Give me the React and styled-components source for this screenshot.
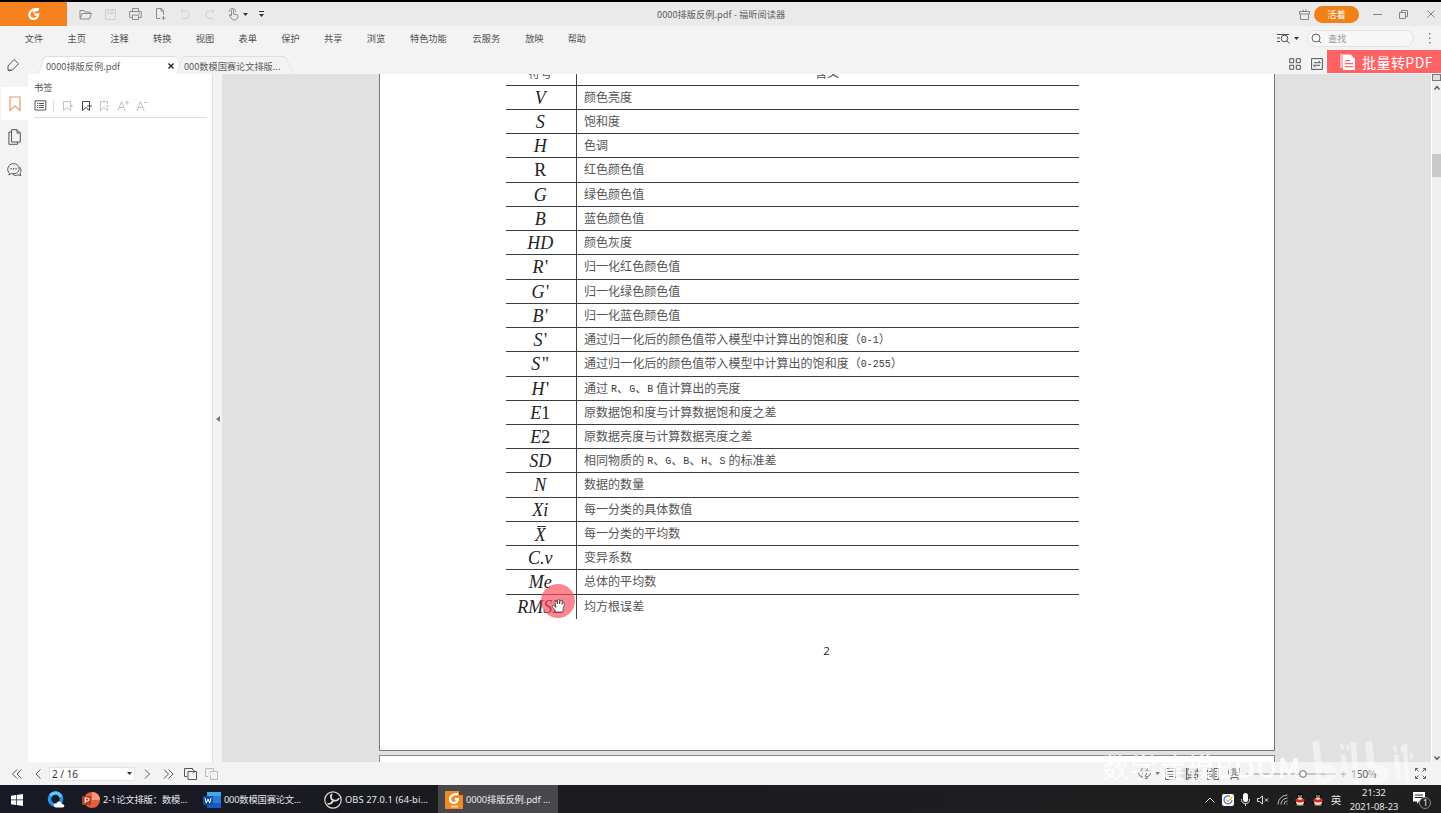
import React from 'react';
import styled, { createGlobalStyle } from 'styled-components';

const Global = createGlobalStyle`
  * { box-sizing: border-box; }
  body { margin: 0; background: #000; overflow: hidden; }
  svg { display: block; flex: none; }
`;

const ui = `'Noto Sans', 'Noto Sans CJK SC', sans-serif`;

const Screen = styled.div`
  width: 1441px;
  height: 813px;
  padding-top: 2px;
  display: flex;
  flex-direction: column;
  background: #000;
  color: #505050;
  font: 9.2px/12px 'Noto Sans CJK SC', sans-serif;
  white-space: pre;
  position: relative;
`;

const TitleBar = styled.header`
  height: 24px;
  display: flex;
  align-items: center;
  background: #eaeaea;
`;
const Brand = styled.div`
  width: 67px;
  height: 24px;
  display: grid;
  place-items: center;
  background: #f5821f;
`;
const QuickTools = styled.div`
  width: 590px;
  padding-left: 6.6px;
  display: flex;
  align-items: center;
`;
const QuickTool = styled.span`
  width: ${p => p.$w || 24.8}px;
  display: flex;
  justify-content: center;
  color: ${p => (p.$off ? '#cfcfcf' : '#8c8c8c')};
`;
const WindowTitle = styled.div`
  flex: 1;
  color: #606060;
  letter-spacing: 0.04px;
`;
const WindowTools = styled.div`
  display: flex;
  align-items: center;
  color: #858585;
`;
const Account = styled.span`
  width: 45px;
  height: 17px;
  margin: 0 8px 0 4px;
  border-radius: 9px;
  background: #f08018;
  color: #fff;
  text-align: center;
  line-height: 17px;
`;
const WinButton = styled.span`
  width: ${p => p.$w}px;
  display: flex;
  justify-content: center;
`;

const MenuBar = styled.nav`
  height: 24px;
  padding-left: 12.6px;
  display: flex;
  align-items: center;
  background: #f3f3f3;
`;
const MenuItem = styled.span`
  width: ${p => p.$w || 42.75}px;
  text-align: center;
`;
const MenuRight = styled.div`
  margin-left: auto;
  display: flex;
  align-items: center;
`;
const CaretSlot = styled.span`
  padding: 0 ${p => p.$r}px 0 4px;
`;
const Search = styled.div`
  width: 107px;
  height: 17px;
  margin: 0 13px 0 8px;
  padding-left: 3px;
  display: flex;
  align-items: center;
  gap: 6px;
  border: 1px solid #e2e2e2;
  border-radius: 9px;
  background: #f7f7f7;
  color: #9a9a9a;
`;

const TabBar = styled.div`
  height: 24px;
  display: flex;
  align-items: flex-end;
  background: #f3f3f3;
`;
const PenSlot = styled.div`
  width: 42px;
  height: 24px;
  padding: 8px 0 0 6px;
`;
const Tab = styled.div`
  position: relative;
  width: ${p => p.$w}px;
  height: 18px;
  margin-right: 7px;
  margin-left: ${p => (p.$active ? 0 : -6)}px;
  padding: 2px ${p => (p.$active ? 5 : 0)}px 0 4px;
  display: flex;
  align-items: center;
  justify-content: space-between;
  color: #5c5c5c;
  &::before, &::after {
    content: '';
    position: absolute;
    top: 0;
    bottom: 0;
    background: ${p => (p.$active ? '#fff' : '#f3f3f3')};
    border-top: 1px solid #dedede;
  }
  &::before {
    left: -1px;
    right: 50%;
    border-left: 1px solid #dedede;
    border-radius: 4px 0 0 0;
    transform: skewX(-18deg);
  }
  &::after {
    right: 0;
    left: calc(50% - 4px);
    border-right: 1px solid #dedede;
    border-radius: 0 4px 0 0;
    transform: skewX(${p => (p.$active ? 18 : 26)}deg);
  }
  > * { position: relative; z-index: 1; }
`;
const TabTools = styled.div`
  height: 24px;
  margin-left: auto;
  display: flex;
  align-items: center;
  gap: 10px;
`;
const ToolSlot = styled.span`
  padding-top: 3px;
`;
const Promo = styled.div`
  width: 114px;
  height: 23px;
  margin: 0 0 1px -6px;
  padding-left: 13px;
  display: flex;
  align-items: center;
  gap: 7px;
  background: #ff6265;
  color: #fff;
  font-size: 14px;
  line-height: 20px;
  letter-spacing: 0.45px;
`;

const Main = styled.main`
  height: 688px;
  display: flex;
  background: #f3f3f3;
`;
const Rail = styled.aside`
  width: 28px;
  padding-top: 13px;
`;
const RailItem = styled.div`
  height: 33px;
  margin-left: 1px;
  display: grid;
  place-items: center;
  background: ${p => (p.$active ? '#fff' : 'transparent')};
  color: ${p => (p.$active ? '#e6986a' : '#555')};
`;
const Panel = styled.section`
  width: 185px;
  padding: 7px 5px 0 6px;
  border-right: 1px solid #e0e0e0;
  background: #fff;
`;
const PanelTools = styled.div`
  height: 25px;
  padding-top: 1px;
  display: flex;
  align-items: center;
  border-bottom: 1px solid #dfdfdf;
`;
const PanelTool = styled.span`
  width: 18.7px;
  display: flex;
  justify-content: center;
  color: ${p => (p.$on ? '#444' : '#c0c0c0')};
`;
const Divider = styled.i`
  width: 1px;
  height: 12px;
  margin: 0 4px 0 6px;
  background: #ddd;
`;
const Splitter = styled.div`
  width: 9px;
  display: flex;
  align-items: center;
  padding: 2px 0 0 3px;
`;
const Canvas = styled.section`
  width: 1209px;
  height: 688px;
  padding-left: 157px;
  overflow: hidden;
  background: #e1e1e1;
`;
const Page = styled.article`
  display: flow-root;
  width: 896px;
  height: 677px;
  padding: 0 194px 0 126px;
  background: #fff;
  border: solid #777;
  border-width: 0 1px 1px 1px;
`;
const NextPage = styled.div`
  width: 896px;
  height: 20px;
  margin-top: 4px;
  background: #fff;
  border: 1px solid #888;
`;
const Table = styled.div`
  width: 573px;
  margin-top: -12.5px;
`;
const Row = styled.div`
  height: ${p => (p.$last ? 22.5 : 24.24)}px;
  display: grid;
  grid-template-columns: 70.5px 1fr;
  border-bottom: ${p => (p.$last ? '0' : '1px solid #3c3c3c')};
`;
const Sym = styled.div`
  height: 100%;
  overflow: hidden;
  border-right: 1px solid #444;
  text-align: center;
  padding-right: 1px;
  color: #222;
  font: ${p => (p.$upright ? 'normal' : 'italic')} 18px/24px 'Liberation Serif', serif;
  i { font-style: normal; }
`;
const Bar = styled.span`
  display: block;
  width: 20px;
  height: 19px;
  margin: 4px auto 0;
  line-height: 19px;
  background: linear-gradient(#333, #333) 7px 0 / 9px 1px no-repeat;
`;
const Meaning = styled.div`
  padding-left: 7.5px;
  color: #3a3a3a;
  font: 10px/21px 'Liberation Mono', 'Noto Sans CJK SC', monospace;
`;
const Song = styled.span`
  font: 400 12.04px/21px 'Noto Sans CJK SC', serif;
  color: #555;
`;
const Half = styled.span`
  word-spacing: -3px;
  vertical-align: 1px;
  line-height: 18px;
`;
const HeadCell = styled.div`
  text-align: center;
  padding-right: 1px;
  color: #555;
  border-right: ${p => (p.$line ? '1px solid #444' : '0')};
  font: 400 12px/22px 'Noto Sans CJK SC', serif;
`;
const PageNumber = styled.div`
  margin-top: 25.5px;
  padding-left: 67px;
  text-align: center;
  color: #222;
  font: 500 11.5px/16px 'Open Sans', sans-serif;
`;
const Scroll = styled.div`
  flex: 1;
  display: flex;
  flex-direction: column;
  align-items: center;
  border-left: 1px solid #fff;
  background: #efefef;
  color: #555;
`;
const ScrollHead = styled.i`
  width: 9px;
  height: 7px;
  margin-bottom: 4px;
  border: 1px solid #777;
  background: #ddd;
`;
const Thumb = styled.i`
  width: 9px;
  height: 23px;
  margin: 63px 0 auto;
  background: #c9c9c9;
`;

const StatusBar = styled.footer`
  height: 23px;
  padding-left: 11px;
  display: flex;
  align-items: center;
  background: #f3f3f3;
  color: #555;
`;
const PageBox = styled.div`
  width: 86px;
  height: 14px;
  margin: 0 8px 0 6px;
  padding: 0 2px;
  display: flex;
  align-items: center;
  justify-content: space-between;
  border: 1px solid #e4e4e4;
  background: #fff;
  color: #333;
  font: 10px/12px ${ui};
`;
const StatusRight = styled.div`
  margin-left: auto;
  display: flex;
  align-items: center;
  color: #666;
`;
const ViewMode = styled.span`
  width: 21px;
  display: flex;
  justify-content: center;
  background: ${p => (p.$on ? '#e0e0e0' : 'transparent')};
`;
const Percent = styled.span`
  width: 68px;
  padding-left: 4px;
  font: 10.5px/12px ${ui};
  letter-spacing: -0.4px;
`;

const TaskBar = styled.div`
  height: 28px;
  display: flex;
  align-items: center;
  background: linear-gradient(90deg, #171925, #1c1b1f 40%, #1f1f1f);
  color: #e8e8e8;
  font: 9.3px/12px ${ui};
`;
const Launcher = styled.div`
  width: ${p => p.$w}px;
  padding-top: 1px;
  display: flex;
  justify-content: center;
`;
const Task = styled.div`
  width: ${p => p.$w}px;
  height: 28px;
  padding: 2px 0 0 ${p => p.$pad}px;
  display: flex;
  align-items: center;
  gap: 3px;
  background: ${p => (p.$active ? '#48484c' : 'transparent')};
  letter-spacing: ${p => p.$ls || 0}px;
`;
const Tray = styled.div`
  margin-left: auto;
  padding-top: 1px;
  display: flex;
  align-items: center;
`;
const TrayItem = styled.span`
  width: ${p => p.$w || 18}px;
  display: flex;
  justify-content: center;
  font-size: ${p => p.$size || 9.3}px;
`;
const Clock = styled.div`
  width: 58px;
  text-align: center;
  line-height: 14px;
`;

const Pointer = styled.div`
  position: absolute;
  left: 541px;
  top: 584px;
  width: 34px;
  height: 34px;
  padding: 15px 0 0 10px;
  border-radius: 50%;
  background: rgba(250, 75, 95, 0.68);
`;
const Watermark = styled.div`
  position: absolute;
  left: 1102px;
  top: 738px;
  display: flex;
  align-items: flex-start;
  gap: 9px;
  color: #fff;
  opacity: 0.8;
  font: 500 27px/58px 'Noto Sans CJK SC', sans-serif;
  letter-spacing: 1.3px;
`;

const Svg = ({ w = 12, h = w, children, sw = 1, fill = 'none' }) => (
  <svg width={w} height={h} viewBox={`0 0 ${w} ${h}`} fill={fill} stroke={fill === 'none' ? 'currentColor' : 'none'} strokeWidth={sw}>
    {children}
  </svg>
);
const Caret = ({ c = '#333' }) => (
  <svg width="5" height="3" viewBox="0 0 5 3"><path d="M0 0h5L2.5 3z" fill={c} /></svg>
);
const FoxitG = ({ size = 12 }) => (
  <svg width={size} height={size} viewBox="0 0 12 12" fill="none">
    <path d="M10.500 1.300C6 .5 1.800 2.500 1.400 6.200 1.100 9.200 3 10.800 5.400 10.800c2.700 0 4.400-1.500 4.700-4.300H6.500" stroke="#fff" strokeWidth="2.300" />
    <path d="M11.500.3C8 .4 5.500 2.500 4.500 6 6.500 4 8 3.300 10 3z" fill="#fff" />
  </svg>
);
const Flag = ({ mark }) => (
  <Svg w={11} h={12}>
    <path d="M8.500 4V1.500h-7v9L5 7.500l3.500 3V8" />
    <path d={mark} />
  </Svg>
);
const Penguin = () => (
  <svg width="12" height="13" viewBox="0 0 12 13">
    <path d="M2 8C0 9 .5 11 2 10M10 8c2 1 1.500 3 0 2" stroke="#111" strokeWidth="1.500" fill="none" />
    <ellipse cx="6" cy="4" rx="3.300" ry="3.800" fill="#080808" />
    <ellipse cx="6" cy="8.500" rx="4" ry="3.700" fill="#eee" />
    <circle cx="4.900" cy="3" r=".8" fill="#fff" /><circle cx="7.100" cy="3" r=".8" fill="#fff" />
    <ellipse cx="6" cy="4.700" rx="1.800" ry=".8" fill="#f5a623" />
    <path d="M1.800 5.500c2.500 1.500 6 1.500 8.400 0l.6 2.700C7.500 9.800 4.500 9.800 1.200 8.200z" fill="#e02020" />
    <path d="M2.500 12h3M6.500 12h3" stroke="#f5a623" strokeWidth="1.200" />
  </svg>
);

const menus = [['文件'], ['主页'], ['注释'], ['转换'], ['视图'], ['表单'], ['保护'], ['共享'], ['浏览'], ['特色功能', 62], ['云服务', 54], ['放映', 42], ['帮助', 43]];

const rows = [
  ['V', '颜色亮度'],
  ['S', '饱和度'],
  ['H', '色调'],
  ['R', '红色颜色值', 'up'],
  ['G', '绿色颜色值'],
  ['B', '蓝色颜色值'],
  ['HD', '颜色灰度'],
  ["R'", '归一化红色颜色值'],
  ["G'", '归一化绿色颜色值'],
  ["B'", '归一化蓝色颜色值'],
  ["S'", '通过归一化后的颜色值带入模型中计算出的饱和度（0-1）'],
  ['S"', '通过归一化后的颜色值带入模型中计算出的饱和度（0-255）'],
  ["H'", '通过 R、G、B 值计算出的亮度'],
  ['E1', '原数据饱和度与计算数据饱和度之差'],
  ['E2', '原数据亮度与计算数据亮度之差'],
  ['SD', '相同物质的 R、G、B、H、S 的标准差'],
  ['N', '数据的数量'],
  ['Xi', '每一分类的具体数值'],
  ['X', '每一分类的平均数', 'bar'],
  ['C.v', '变异系数'],
  ['Me', '总体的平均数'],
  ['RMSE', '均方根误差'],
];

const Mixed = ({ text }) =>
  text.split(/([ -~]+)/).filter(Boolean).map((part, i) =>
    /^[ -~]/.test(part) ? <Half key={i}>{part}</Half> : <Song key={i}>{part}</Song>);

const Symbol = ({ text, kind }) => {
  if (kind === 'bar') return <Bar>{text}</Bar>;
  return text.split(/(['"\d]+)/).map((s, i) => (i % 2 ? <i key={i}>{/\d/.test(s) ? s : `\u200a${s}`}</i> : s));
};

export default function App() {
  return (
    <Screen>
      <Global />
      <TitleBar>
        <Brand><FoxitG /></Brand>
        <QuickTools>
          <QuickTool><Svg w={13} h={11}><path d="M1 9.500V1.500h4l1 1.500h5v1.500M1 10l2-5.500h9.500l-2 5.500z" /></Svg></QuickTool>
          <QuickTool $off><Svg w={11}><path d="M.5.500h10v10H.5zM3 .5v4h5v-4M6.500 1.500v2" /></Svg></QuickTool>
          <QuickTool><Svg w={13} h={12}><path d="M3.500 3.500v-3h6v3M3 9.500H.7v-6h11.600v6H10M3.500 7h6v4.500h-6zM9.500 5.300h1.500" /></Svg></QuickTool>
          <QuickTool><Svg w={11} h={12}><path d="M5 10.500H1.500v-10h5L8.500 3v4M6 .5V3h2.500M8.500 8v4M6.500 10h4" /></Svg></QuickTool>
          <QuickTool $off><Svg w={10} h={11}><path d="M1 2h4.500a3.800 3.800 0 0 1 0 7.600H2M3 0L1 2l2 2" /></Svg></QuickTool>
          <QuickTool $off><Svg w={10} h={11}><path d="M9 2H4.500a3.800 3.800 0 0 0 0 7.600H8M7 0l2 2-2 2" /></Svg></QuickTool>
          <QuickTool $w={21}><Svg w={12} h={13}><path d="M4.500 8V2.500c0-1.400 2-1.400 2 0V6l3.500.8c1 .3 1 1 .8 2-.3 2-1.300 3.200-3.300 3.200-2 0-3-1-4-3L2 7c.6-1 1.700-.4 2.500 1M2.500 4C1.500 1.500 4 .5 5.500.500S9 1.500 8.500 4" /></Svg></QuickTool>
          <Caret />
          <QuickTool $w={28}><Svg w={6} h={6} fill="#333"><path d="M0 0h5v1H0zM0 3h5L2.500 6z" /></Svg></QuickTool>
        </QuickTools>
        <WindowTitle>0000排版反例.pdf - 福昕阅读器</WindowTitle>
        <WindowTools>
          <Svg w={11} h={11}><path d="M.5 2.500h10v2.500H.5zM1.500 5v5.500h8V5M3.500.500L5.500 2.500 7.500.5" /></Svg>
          <Account>活着</Account>
          <WinButton $w={20}><Svg w={9} h={9}><path d="M0 4.500h9" /></Svg></WinButton>
          <WinButton $w={33}><Svg w={9} h={9}><path d="M.5 2.500h6v6h-6zM2.500 2V.5h6v6H7" /></Svg></WinButton>
          <WinButton $w={21}><Svg w={8} h={8}><path d="M.5.500l7 7M7.500.5l-7 7" /></Svg></WinButton>
        </WindowTools>
      </TitleBar>
      <MenuBar>
        {menus.map(([m, w]) => <MenuItem key={m} $w={w}>{m}</MenuItem>)}
        <MenuRight>
          <Svg w={13} h={11}><path d="M0 1.500h12M0 5h3M0 8.500h3" /><circle cx="7.500" cy="5.500" r="3.300" /><path d="M10 8l2.500 2.500" /></Svg>
          <CaretSlot $r={0}><Caret /></CaretSlot>
          <Search><Svg w={11} h={11}><circle cx="5" cy="5" r="4" stroke="#666" /><path d="M8 8l2 2" stroke="#666" /></Svg>查找</Search>
          <Svg w={14} h={11} fill="#777"><path d="M2 0h1.400v1.500H2zM2 4.500h1.400V6H2zM2 9h1.400v1.500H2z" /></Svg>
        </MenuRight>
      </MenuBar>
      <TabBar>
        <PenSlot><Svg w={14} h={14}><path d="M2 8L8 1.500l4.500 4.200L6.500 12l-4.500.3zM2 12.300h3" stroke="#555" /></Svg></PenSlot>
        <Tab $w={137} $active><span>0000排版反例.pdf</span><Svg w={6} h={6} sw={1.400}><path d="M.5.500l5 5M5.500.5l-5 5" stroke="#222" /></Svg></Tab>
        <Tab $w={110}><span>000数模国赛论文排版...</span></Tab>
        <TabTools>
          <ToolSlot><Svg w={12} h={12}><path d="M.7.700h4v4h-4zM7.300.7h4v4h-4zM.7 7.300h4v4h-4zM7.300 7.300h4v4h-4z" stroke="#555" /></Svg></ToolSlot>
          <ToolSlot><Svg w={12} h={12}><path d="M.6.600h10.800v10.800H.6zM3 4.700h6.500L7.500 2.800M9 7.300H2.500l2 1.900" stroke="#555" /></Svg></ToolSlot>
          <Promo>
            <Svg w={15} h={16} fill="#fff"><path d="M0 0h10l2 2v12H0z" opacity=".55" /><path d="M3 1h8l4 4v11H3z" /><path d="M5 6h5v1.300H5zM5 9h8v1.300H5zM5 12h8v1.300H5z" fill="#ff6265" /></Svg>
            批量转PDF
          </Promo>
        </TabTools>
      </TabBar>
      <Main>
        <Rail>
          <RailItem $active><Svg w={12} h={16} sw={1.2}><path d="M1 1h10v13.500L6 10l-5 4.500z" /></Svg></RailItem>
          <RailItem><Svg w={13} h={16}><path d="M3.500.700h5.500l3.300 3.300v9H3.500zM9 .7V4h3.300M3.500 3H.9v12.300h8.600V13" /></Svg></RailItem>
          <RailItem><Svg w={15} h={14}><path d="M2.500 10.500C-1 7 1 .7 6.500.700S13 6 11.500 8.200C9.500 11 6 11 4.500 10.500L1.800 12zM12.500 4c2.500 2.500 1.500 5 .5 6.200l.8 2.500-2.800-.9c-2 1-4 .7-5.500-.8" /><path d="M3.500 5.700h1.200M6 5.700h1.200M8.500 5.700h1.200" strokeWidth="1.400" /></Svg></RailItem>
        </Rail>
        <Panel>
          <div>书签</div>
          <PanelTools>
            <Svg w={13} h={11}><path d="M1 .800h10.800v9.200H1zM3 3.500h1.200M5 3.500h5M3 5.500h1.200M5 5.500h5M3 7.500h1.200M5 7.500h5" stroke="#555" /></Svg>
            <Divider />
            <PanelTool><Flag mark="M7 6h4M9 4v4" /></PanelTool>
            <PanelTool $on><Flag mark="M6 6h5M8.500 3.500v5" /></PanelTool>
            <PanelTool><Flag mark="M6.500 6h4" /></PanelTool>
            <PanelTool><Svg w={12} h={12}><path d="M1 11L4.500 1.500 8.200 11M2.300 7.500h4.700M8 2.500h4M10 .5v4" /></Svg></PanelTool>
            <PanelTool><Svg w={12} h={12}><path d="M1 11L4.500 1.500 8.200 11M2.300 7.500h4.700M8 2.500h3.500" /></Svg></PanelTool>
          </PanelTools>
        </Panel>
        <Splitter><Svg w={4} h={6} fill="#777"><path d="M4 0v6L0 3z" /></Svg></Splitter>
        <Canvas>
          <Page>
            <Table>
              <Row><HeadCell $line>符号</HeadCell><HeadCell>含义</HeadCell></Row>
              {rows.map(([s, m, kind], i) => (
                <Row key={s + i} $last={i === rows.length - 1}>
                  <Sym $upright={kind === 'up'}><Symbol text={s} kind={kind} /></Sym>
                  <Meaning><Mixed text={m} /></Meaning>
                </Row>
              ))}
            </Table>
            <PageNumber>2</PageNumber>
          </Page>
          <NextPage />
        </Canvas>
        <Scroll>
          <ScrollHead />
          <Svg w={6} h={6} sw={1.400}><path d="M.5 4.500L3 1.500l2.500 3" /></Svg>
          <Thumb />
          <Svg w={6} h={7} sw={1.400}><path d="M.5 1.500L3 4.500l2.500-3" /></Svg>
        </Scroll>
      </Main>
      <StatusBar>
        <Svg w={12} h={10}><path d="M6 .5L1.500 5 6 9.500M10.500.5L6 5l4.500 4.500" /></Svg>
        <Svg w={20} h={10}><path d="M17.500.500L13 5l4.500 4.500" /></Svg>
        <PageBox>2 / 16<Caret /></PageBox>
        <Svg w={20} h={10}><path d="M2 .500L6.500 5 2 9.500" /></Svg>
        <Svg w={21} h={10}><path d="M1 .500L5.500 5 1 9.500M5.500.5L10 5 5.500 9.500" /></Svg>
        <Svg w={21} h={12}><path d="M3 8.500H.5v-8h8v1.500M4 3.500h8.500v8H4zM7 3.500h3.500M9 1.500l2 2-2 2" /></Svg>
        <Svg w={14} h={12}><path d="M3 8.500H.5v-8h8v3M4 5.500L6 3.500h6.500v8H5.500v-4" stroke="#bbb" /></Svg>
        <StatusRight>
          <Svg w={13} h={11}><ellipse cx="6.500" cy="5.500" rx="5.900" ry="3.500" /><circle cx="6.500" cy="5.500" r="2" /><path d="M3 1.200C5 0 8 0 10 1.200M3 9.800c2 1.200 5 1.200 7 0" /></Svg>
          <CaretSlot $r={0}><Caret c="#777" /></CaretSlot>
          <ViewMode><Svg w={11} h={12}><path d="M.5.500h10v11H.5zM2.500 3.500h6M2.500 6h6M2.500 8.500h6" /></Svg></ViewMode>
          <ViewMode $on><Svg w={12} h={12}><path d="M2 0v7h8V0M4 1.500h4M4 4h4M2 12V9.500h8V12M.5 0v12M11.500 0v12" /></Svg></ViewMode>
          <ViewMode><Svg w={12} h={12}><path d="M.5.500H5v11H.5zM7 .5h4.500v11H7zM2 3.500h2M2 6h2M2 8.500h2M8 3.500h2M8 6h2M8 8.500h2" /></Svg></ViewMode>
          <ViewMode><Svg w={12} h={12}><path d="M.5 0v7H5V0M7 0v7h4.500V0M2 2h2M2 4.500h2M8 2h2M8 4.500h2M3 12V9.500h7V12" /></Svg></ViewMode>
          <Svg w={103} h={8}><path d="M2 4h4M10 4h45M63 4h29M97 4h6M100 1v6" stroke="#999" /><circle cx="59" cy="4" r="3.300" stroke="#666" fill="#fff" /></Svg>
          <Percent>150%</Percent>
          <Svg w={26} h={11}><path d="M.500 3V.5H3M.5.500L3.500 3.500M8 .5h2.500V3M10.500.5l-3 3M.5 8v2.500H3M.5 10.500l3-3M8 10.500h2.500V8M10.500 10.500l-3-3" /></Svg>
        </StatusRight>
      </StatusBar>
      <TaskBar>
        <Launcher $w={34}><Svg w={12} h={12} fill="#fff"><path d="M0 1.700L5 1v4.600H0zM5.700.9L12 0v5.600H5.700zM0 6.300h5V11L0 10.300zM5.700 6.300H12V12l-6.300-.9z" /></Svg></Launcher>
        <Launcher $w={43}>
          <svg width="18" height="17" viewBox="0 0 18 17" fill="none"><circle cx="8.500" cy="8" r="6" stroke="#2494f0" strokeWidth="3.500" /><path d="M3.500 4.500A6 6 0 0 1 14 6" stroke="#5cc8fa" strokeWidth="3" /><path d="M9 16.500c-3.500-.5-2.500-4.500.5-4 1-3 5-2.500 5.500.5 3 0 3 3.500.5 3.500z" fill="#fff" /></svg>
        </Launcher>
        <Task $w={121} $pad={5} $ls={-0.15}>
          <svg width="18" height="16" viewBox="0 0 18 16"><circle cx="10" cy="8" r="8" fill="#e0603c" /><path d="M10 0a8 8 0 0 1 8 8h-8z" fill="#f59a78" /><rect x="0" y="4" width="9" height="9" rx="1" fill="#b83a1c" /><path d="M3.300 11V6h2.200a1.500 1.500 0 0 1 0 3H3.500" fill="none" stroke="#fff" strokeWidth="1.200" /></svg>
          2-1论文排版：数模...
        </Task>
        <Task $w={121} $pad={5} $ls={-0.2}>
          <svg width="18" height="16" viewBox="0 0 18 16"><rect x="4" y="0" width="14" height="16" rx="1" fill="#2b7cd3" /><path d="M4 0h14v4H4z" fill="#41a5ee" /><path d="M4 11h14v5H4z" fill="#185abd" /><rect y="4" width="10" height="9" rx="1" fill="#164ba0" /><path d="M2 6l1.300 5L5 7l1.700 4L8 6" fill="none" stroke="#fff" /></svg>
          000数模国赛论文...
        </Task>
        <Task $w={119} $pad={5} $ls={0.08}>
          <svg width="18" height="18" viewBox="0 0 18 18" fill="none"><circle cx="9" cy="9" r="8.200" fill="#111" stroke="#ddd" strokeWidth="1.200" /><path d="M8 3c-2 2-1.500 5 1 6M9 9c2.500 1.500 5 .5 6-2M9 9c-.5 3-3 4.500-5.500 3.500" stroke="#ddd" strokeWidth="1.800" /></svg>
          OBS 27.0.1 (64-bi...
        </Task>
        <Task $w={120} $pad={7} $active $ls={-0.08}>
          <svg width="18" height="18" viewBox="0 0 18 18"><path d="M0 0h14l4 4v14H0z" fill="#ef8a24" /><path d="M14 0v4h4z" fill="#5a3a1c" /><g transform="translate(4 2.500) scale(.85)"><path d="M11 .8C6 .2 1.600 2 1.200 6.200.9 9.400 3 11 5.400 11c2.700 0 4.600-1.500 5-4.500H6.800" stroke="#fff" strokeWidth="2.600" fill="none" /></g><path d="M6 15.500h7" stroke="#fbd3a5" strokeWidth="1.800" /></svg>
          0000排版反例.pdf ...
        </Task>
        <Tray>
          <TrayItem><Svg w={10} h={6}><path d="M.5 5.500L5 1l4.500 4.500" /></Svg></TrayItem>
          <TrayItem>
            <svg width="12" height="12" viewBox="0 0 12 12" fill="none"><rect width="12" height="12" rx="2" fill="#fff" /><path d="M8 2.400A4 4 0 1 0 10 6" stroke="#4772d8" strokeWidth="1.300" /><path d="M4 5.500L6 7.500 10.300 2.800" stroke="#f0b42c" strokeWidth="1.400" /></svg>
          </TrayItem>
          <TrayItem $w={17}><svg width="9" height="13" viewBox="0 0 9 13" fill="none"><rect x="2" y="0" width="5" height="9" rx="2.500" fill="#fff" /><path d="M.6 6v1.500c0 4 7.800 4 7.800 0V6M4.500 10.500V13" stroke="#ddd" /></svg></TrayItem>
          <TrayItem><Svg w={12} h={10}><path d="M.500 3.500h2L5.500 1v8l-3-2.500h-2zM8 3.500l3 3M11 3.500l-3 3" /></Svg></TrayItem>
          <TrayItem $w={20}><Svg w={11} h={11}><path d="M1 10.500A9.500 9.500 0 0 1 10.500 1M4 10.500A6.500 6.500 0 0 1 10.500 4M7 10.500A3.500 3.500 0 0 1 10.500 7M9.500 10h1" stroke="#bbb" /></Svg></TrayItem>
          <TrayItem $w={16}><Penguin /></TrayItem>
          <TrayItem $w={19}><Penguin /></TrayItem>
          <TrayItem $w={18} $size={10.5}>英</TrayItem>
          <Clock>21:32<br />2021-08-23</Clock>
          <TrayItem $w={38}>
            <svg width="18" height="18" viewBox="0 0 18 18" fill="none"><path d="M0 1h12v9.500H6L4 13v-2.500H0z" fill="#fff" /><path d="M2 4h8M2 6.500h8" stroke="#222" /><circle cx="12" cy="12" r="5.500" fill="#222" stroke="#888" /><text x="10" y="15" fill="#fff" fontSize="8.5" fontFamily="Noto Sans">1</text></svg>
          </TrayItem>
        </Tray>
      </TaskBar>
      <Pointer>
        <svg width="16" height="14" viewBox="0 0 16 14"><path d="M5 13L1.500 8c-1-1.500.8-2.200 1.800-1L5 8.500 4 3c0-1.500 1.600-1.500 2 0l.5 2V1.500c0-1.500 1.900-1.500 2 0V5l.7-3c.3-1.300 2-1.100 1.900.3L11 5.500l1-1.500c.8-1 2-.2 1.600 1L12 9.500V13z" fill="#fff" stroke="#333" strokeWidth=".7" /></svg>
      </Pointer>
      <Watermark>
        数学建模BOOM
        <svg width="104" height="50" viewBox="0 0 106 50" preserveAspectRatio="none" fill="#fff" opacity=".6">
          <path d="M1 4l7-2 3 24c9 0 15 4 15 9 0 7-9 11-20 12zM10 34l1 8 8-4zM30 17l5-1 3 25h-4zM29 6l4-1 1 7h-3zM36 7l3-1 0 7h-2zM40 4h6l3 42h-5z" />
          <path d="M55 4l7-2 3 24c9 0 15 4 15 9 0 7-9 11-20 12zM64 34l1 8 8-4zM84 17l5-1 3 25h-4zM83 9l4-1 1 7h-3zM91 9l3-1 0 7h-2zM93 6h5l2 38h-4zM101 15h3l-1 7h-2z" />
        </svg>
      </Watermark>
    </Screen>
  );
}
